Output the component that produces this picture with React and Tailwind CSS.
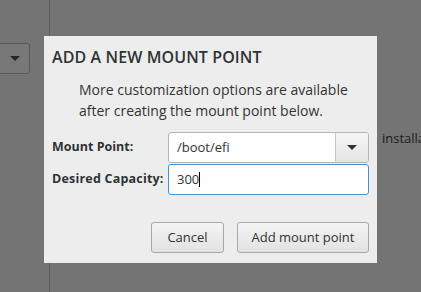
export default function App() {
  return (
    <div
      className="relative w-[421px] h-[292px] overflow-hidden bg-[#747474] text-[#2e3436]"
      style={{ fontFamily: '"Open Sans", "DejaVu Sans", sans-serif' }}
    >
      {/* page behind the dialog */}
      <div className="absolute left-[49px] top-0 h-full w-px bg-[#5f5f5f]" />
      <button className="absolute left-[-6px] top-[43px] w-[36px] h-[31px] rounded-[3px] border border-[#595959] bg-[#787878] flex items-center justify-center pl-[6px]">
        <span className="w-0 h-0 border-l-[5px] border-r-[5px] border-t-[5px] border-l-transparent border-r-transparent border-t-[#262626]" />
      </button>
      <div className="absolute left-[382px] top-[129px] text-[13px] text-[#1c1c1c]">installation</div>

      {/* dialog */}
      <div className="absolute left-[44px] top-[36px] w-[333px] h-[227px] bg-[#ededed] pl-[8px] pr-[8px]">
        <h2 className="mt-[11px] text-[16px] font-semibold leading-[20px] tracking-[0.1px]">ADD A NEW MOUNT POINT</h2>
        <p className="mt-[12px] ml-[27px] text-[14px] leading-[21px] text-[#333]">
          More customization options are available
          <br />
          after creating the mount point below.
        </p>
        <div className="mt-[11px] flex flex-col gap-[1px]">
          <div className="flex items-center h-[31px]">
            <label className="w-[116px] text-[12.5px] font-bold">Mount Point:</label>
            <div className="flex w-[201px] h-[31px] rounded-[3px] border border-[#b6b6b3] bg-white overflow-hidden">
              <div className="flex-1 flex items-center pl-[8px] text-[13px]">/boot/efi</div>
              <div className="w-[33px] border-l border-[#c6c6c3] bg-gradient-to-b from-[#f6f6f6] to-[#e4e4e4] flex items-center justify-center">
                <span className="w-0 h-0 border-l-[5px] border-r-[5px] border-t-[5px] border-l-transparent border-r-transparent border-t-[#2e3436]" />
              </div>
            </div>
          </div>
          <div className="flex items-center h-[31px]">
            <label className="w-[116px] text-[12.5px] font-bold tracking-[0.2px]">Desired Capacity:</label>
            <div className="flex items-center w-[201px] h-[31px] rounded-[3px] border border-[#4a90d9] bg-white pl-[8px] text-[13px]">
              300
              <span className="w-px h-[15px] bg-black" />
            </div>
          </div>
        </div>
        <div className="mt-[27px] flex justify-end gap-[13px]">
          <button className="w-[73px] h-[31px] rounded-[3px] border border-[#a8a8a8] bg-gradient-to-b from-[#f4f4f4] to-[#e2e2e2] text-[13px]">
            Cancel
          </button>
          <button className="w-[132px] h-[31px] rounded-[3px] border border-[#a8a8a8] bg-gradient-to-b from-[#f4f4f4] to-[#e2e2e2] text-[13px]">
            Add mount point
          </button>
        </div>
      </div>
    </div>
  );
}
